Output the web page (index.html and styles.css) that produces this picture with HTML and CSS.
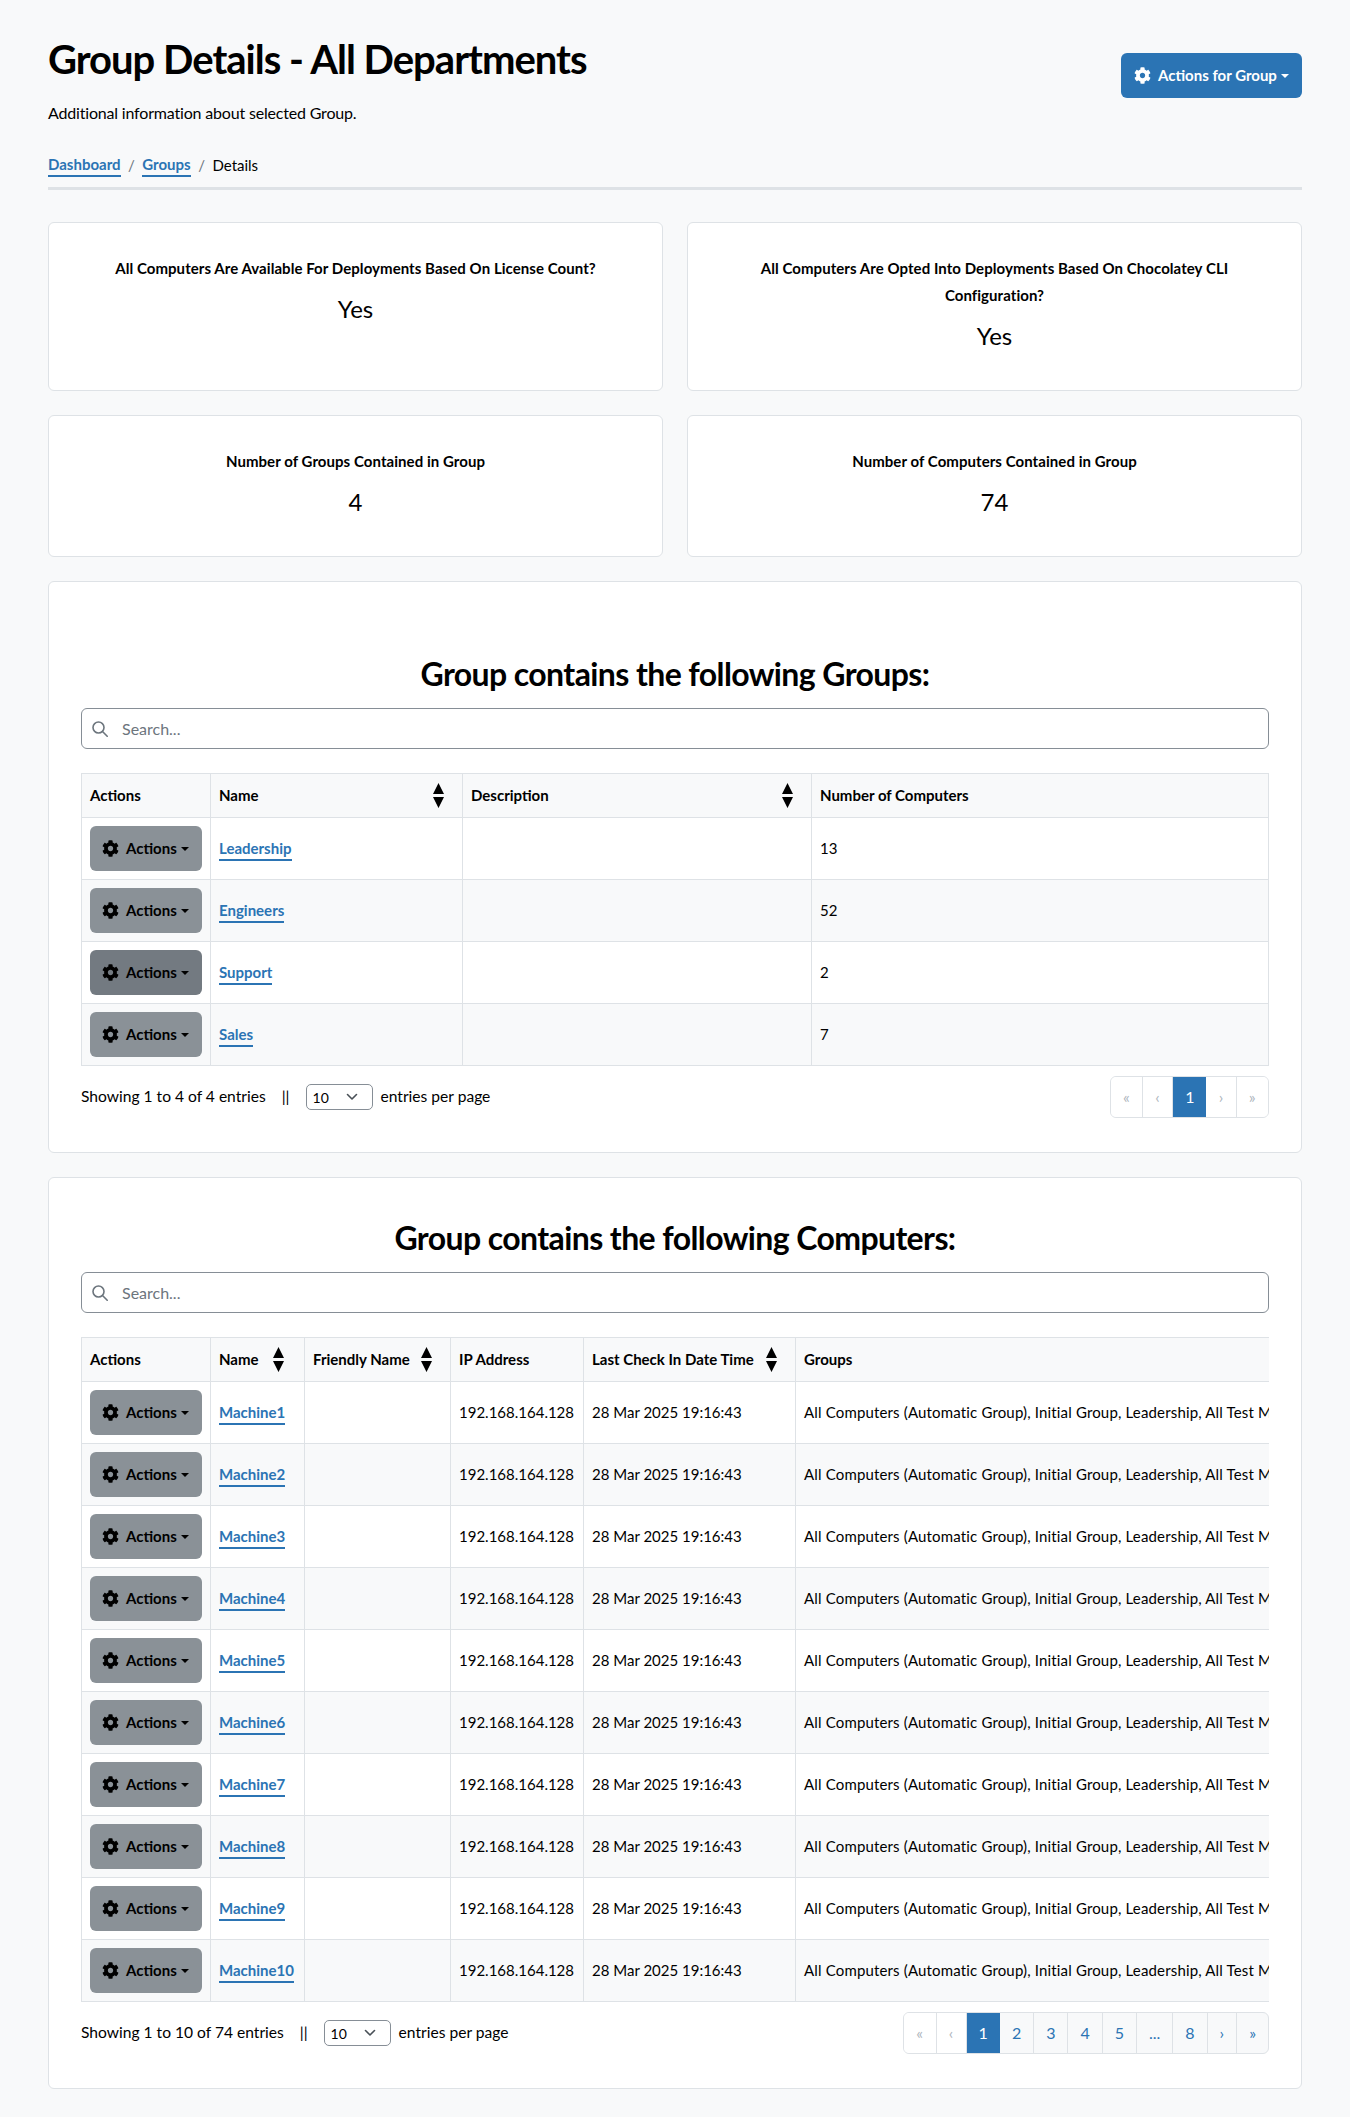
FILE: index.html
```html
<!DOCTYPE html>
<html>
<head>
<meta charset="utf-8">
<title>Group Details</title>
<link rel="stylesheet" href="styles.css">
</head>
<body>
<svg class="sprite">
<symbol id="gear" viewBox="0 0 512 512"><path d="M487.4 315.7l-42.6-24.6c4.3-23.2 4.3-47 0-70.2l42.6-24.6c4.9-2.8 7.1-8.6 5.5-14-11.1-35.6-30-67.8-54.7-94.6-3.8-4.1-10-5.1-14.8-2.3L380.8 110c-17.9-15.4-38.5-27.3-60.8-35.1V25.8c0-5.6-3.9-10.5-9.4-11.7-36.7-8.2-74.3-7.8-109.2 0-5.5 1.2-9.4 6.1-9.4 11.7V75c-22.2 7.9-42.8 19.8-60.8 35.1L88.7 85.5c-4.9-2.8-11-1.9-14.8 2.3-24.7 26.7-43.6 58.9-54.7 94.6-1.7 5.4.6 11.2 5.5 14L67.3 221c-4.3 23.2-4.3 47 0 70.2l-42.6 24.6c-4.9 2.8-7.1 8.6-5.5 14 11.1 35.6 30 67.8 54.7 94.6 3.8 4.1 10 5.1 14.8 2.3l42.6-24.6c17.9 15.4 38.5 27.3 60.8 35.1v49.2c0 5.6 3.9 10.5 9.4 11.7 36.7 8.2 74.3 7.8 109.2 0 5.5-1.2 9.4-6.1 9.4-11.7v-49.2c22.2-7.9 42.8-19.8 60.8-35.1l42.6 24.6c4.9 2.8 11 1.9 14.8-2.3 24.7-26.7 43.6-58.9 54.7-94.6 1.5-5.5-.7-11.3-5.6-14.1zM256 336c-44.1 0-80-35.9-80-80s35.9-80 80-80 80 35.9 80 80-35.9 80-80 80z"/></symbol>
<symbol id="sort" viewBox="0 0 11 25"><path d="M5.5 0L11 11H0zM0 14h11L5.5 25z"/></symbol>
<symbol id="search" viewBox="0 0 16 16"><circle cx="6.5" cy="6.5" r="5.5" fill="none" stroke="currentColor" stroke-width="1.6"/><path d="M10.5 10.5L15.2 15.2" stroke="currentColor" stroke-width="1.6" stroke-linecap="round"/></symbol>
<symbol id="chevron" viewBox="0 0 12 8"><path d="M1.5 1.5L6 6l4.5-4.5" fill="none" stroke="currentColor" stroke-width="1.6" stroke-linecap="round" stroke-linejoin="round"/></symbol>
</svg>

<div class="page">

<div class="page-head">
<div>
<h1>Group Details - All Departments</h1>
<p class="lead">Additional information about selected Group.</p>
<div class="crumbs">
<a href="#">Dashboard</a><span class="sep">/</span><a href="#">Groups</a><span class="sep">/</span><span>Details</span>
</div>
</div>
<a href="#" class="btn btn-primary"><svg class="gear"><use href="#gear"/></svg>Actions for Group<span class="caret"></span></a>
</div>
<hr class="rule">

<div class="stats">
<div class="card stat">
<div class="stat-title">All Computers Are Available For Deployments Based On License Count?</div>
<div class="stat-value">Yes</div>
</div>
<div class="card stat">
<div class="stat-title">All Computers Are Opted Into Deployments Based On Chocolatey CLI Configuration?</div>
<div class="stat-value">Yes</div>
</div>
<div class="card stat">
<div class="stat-title">Number of Groups Contained in Group</div>
<div class="stat-value">4</div>
</div>
<div class="card stat">
<div class="stat-title">Number of Computers Contained in Group</div>
<div class="stat-value">74</div>
</div>
</div>

<div class="card panel panel-first">
<h2>Group contains the following Groups:</h2>
<div class="search"><svg class="search-icon"><use href="#search"/></svg><span>Search...</span></div>
<div class="table-wrap">
<table class="grid groups-grid">
<colgroup><col class="g1"><col class="g2"><col class="g3"><col class="g4"></colgroup>
<thead>
<tr><th>Actions</th><th><div class="th-sort">Name<svg class="sort"><use href="#sort"/></svg></div></th><th><div class="th-sort">Description<svg class="sort"><use href="#sort"/></svg></div></th><th>Number of Computers</th></tr>
</thead>
<tbody>
<tr><td><a href="#" class="btn btn-row"><svg class="gear"><use href="#gear"/></svg>Actions<span class="caret"></span></a></td><td><a href="#" class="link">Leadership</a></td><td></td><td>13</td></tr>
<tr><td><a href="#" class="btn btn-row"><svg class="gear"><use href="#gear"/></svg>Actions<span class="caret"></span></a></td><td><a href="#" class="link">Engineers</a></td><td></td><td>52</td></tr>
<tr><td><a href="#" class="btn btn-row btn-hover"><svg class="gear"><use href="#gear"/></svg>Actions<span class="caret"></span></a></td><td><a href="#" class="link">Support</a></td><td></td><td>2</td></tr>
<tr><td><a href="#" class="btn btn-row"><svg class="gear"><use href="#gear"/></svg>Actions<span class="caret"></span></a></td><td><a href="#" class="link">Sales</a></td><td></td><td>7</td></tr>
</tbody>
</table>
</div>
<div class="table-foot">
<div class="showing">Showing 1 to 4 of 4 entries<span class="bars">||</span><span class="per-page">10<svg class="chevron"><use href="#chevron"/></svg></span>entries per page</div>
<ul class="pager">
<li class="off">«</li><li class="off">‹</li><li class="on">1</li><li class="off">›</li><li class="off">»</li>
</ul>
</div>
</div>

<div class="card panel">
<h2>Group contains the following Computers:</h2>
<div class="search"><svg class="search-icon"><use href="#search"/></svg><span>Search...</span></div>
<div class="table-wrap">
<table class="grid computers-grid">
<colgroup><col class="c1"><col class="c2"><col class="c3"><col class="c4"><col class="c5"><col class="c6"></colgroup>
<thead>
<tr><th>Actions</th><th><div class="th-sort">Name<svg class="sort sort-name"><use href="#sort"/></svg></div></th><th><div class="th-sort">Friendly Name<svg class="sort"><use href="#sort"/></svg></div></th><th>IP Address</th><th><div class="th-sort">Last Check In Date Time<svg class="sort"><use href="#sort"/></svg></div></th><th>Groups</th></tr>
</thead>
<tbody>
<tr><td><a href="#" class="btn btn-row"><svg class="gear"><use href="#gear"/></svg>Actions<span class="caret"></span></a></td><td><a href="#" class="link">Machine1</a></td><td></td><td>192.168.164.128</td><td>28 Mar 2025 19:16:43</td><td class="groups-cell">All Computers (Automatic Group), Initial Group, Leadership, All Test Machines</td></tr>
<tr><td><a href="#" class="btn btn-row"><svg class="gear"><use href="#gear"/></svg>Actions<span class="caret"></span></a></td><td><a href="#" class="link">Machine2</a></td><td></td><td>192.168.164.128</td><td>28 Mar 2025 19:16:43</td><td class="groups-cell">All Computers (Automatic Group), Initial Group, Leadership, All Test Machines</td></tr>
<tr><td><a href="#" class="btn btn-row"><svg class="gear"><use href="#gear"/></svg>Actions<span class="caret"></span></a></td><td><a href="#" class="link">Machine3</a></td><td></td><td>192.168.164.128</td><td>28 Mar 2025 19:16:43</td><td class="groups-cell">All Computers (Automatic Group), Initial Group, Leadership, All Test Machines</td></tr>
<tr><td><a href="#" class="btn btn-row"><svg class="gear"><use href="#gear"/></svg>Actions<span class="caret"></span></a></td><td><a href="#" class="link">Machine4</a></td><td></td><td>192.168.164.128</td><td>28 Mar 2025 19:16:43</td><td class="groups-cell">All Computers (Automatic Group), Initial Group, Leadership, All Test Machines</td></tr>
<tr><td><a href="#" class="btn btn-row"><svg class="gear"><use href="#gear"/></svg>Actions<span class="caret"></span></a></td><td><a href="#" class="link">Machine5</a></td><td></td><td>192.168.164.128</td><td>28 Mar 2025 19:16:43</td><td class="groups-cell">All Computers (Automatic Group), Initial Group, Leadership, All Test Machines</td></tr>
<tr><td><a href="#" class="btn btn-row"><svg class="gear"><use href="#gear"/></svg>Actions<span class="caret"></span></a></td><td><a href="#" class="link">Machine6</a></td><td></td><td>192.168.164.128</td><td>28 Mar 2025 19:16:43</td><td class="groups-cell">All Computers (Automatic Group), Initial Group, Leadership, All Test Machines</td></tr>
<tr><td><a href="#" class="btn btn-row"><svg class="gear"><use href="#gear"/></svg>Actions<span class="caret"></span></a></td><td><a href="#" class="link">Machine7</a></td><td></td><td>192.168.164.128</td><td>28 Mar 2025 19:16:43</td><td class="groups-cell">All Computers (Automatic Group), Initial Group, Leadership, All Test Machines</td></tr>
<tr><td><a href="#" class="btn btn-row"><svg class="gear"><use href="#gear"/></svg>Actions<span class="caret"></span></a></td><td><a href="#" class="link">Machine8</a></td><td></td><td>192.168.164.128</td><td>28 Mar 2025 19:16:43</td><td class="groups-cell">All Computers (Automatic Group), Initial Group, Leadership, All Test Machines</td></tr>
<tr><td><a href="#" class="btn btn-row"><svg class="gear"><use href="#gear"/></svg>Actions<span class="caret"></span></a></td><td><a href="#" class="link">Machine9</a></td><td></td><td>192.168.164.128</td><td>28 Mar 2025 19:16:43</td><td class="groups-cell">All Computers (Automatic Group), Initial Group, Leadership, All Test Machines</td></tr>
<tr><td><a href="#" class="btn btn-row"><svg class="gear"><use href="#gear"/></svg>Actions<span class="caret"></span></a></td><td><a href="#" class="link">Machine10</a></td><td></td><td>192.168.164.128</td><td>28 Mar 2025 19:16:43</td><td class="groups-cell">All Computers (Automatic Group), Initial Group, Leadership, All Test Machines</td></tr>
</tbody>
</table>
</div>
<div class="table-foot">
<div class="showing">Showing 1 to 10 of 74 entries<span class="bars">||</span><span class="per-page">10<svg class="chevron"><use href="#chevron"/></svg></span>entries per page</div>
<ul class="pager">
<li class="off">«</li><li class="off">‹</li><li class="on">1</li><li>2</li><li>3</li><li>4</li><li>5</li><li>...</li><li>8</li><li>›</li><li>»</li>
</ul>
</div>
</div>

</div> <!-- page -->
</body>
</html>
```

FILE: styles.css
```css
body {
	margin: 0;
	background: #f8f9fa;
	color: #000;
	font-family: "Lato", "Liberation Sans", sans-serif;
	font-size: 16px;
	line-height: 1.5;
}

a {
	text-decoration: none;
}

.sprite {
	display: none;
}

.page {
	padding: 36px 48px 28px;
}

.page-head {
	display: flex;
	justify-content: space-between;
	align-items: flex-start;
}

h1 {
	margin: -1px 0 18px;
	font-size: 40px;
	line-height: 48px;
	font-weight: 700;
	letter-spacing: -1px;
}

.lead {
	margin: 0 0 28px;
	letter-spacing: -.18px;
}

.crumbs {
	display: flex;
	height: 24px;
	font-size: 15px;
	line-height: 24px;
}

.crumbs a {
	color: #2b74b4;
	font-weight: 700;
	border-bottom: 2px solid #2b74b4;
	padding-top: 1px;
	line-height: 21px;
	height: 21px;
}

.sep {
	color: #6c757d;
	margin: 0 7.5px;
}

.rule {
	height: 3px;
	margin: 10px 0 32px;
	border: 0;
	background: #dee2e6;
}

.btn {
	display: inline-flex;
	align-items: center;
	height: 45px;
	box-sizing: border-box;
	border-radius: 6px;
	font-weight: 700;
	font-size: 15px;
}

.btn-primary {
	margin-top: 17px;
	width: 181px;
	padding-left: 13px;
	background: #2b74b4;
	color: #fff;
}

.btn-row {
	width: 112px;
	padding-left: 12px;
	background: #8a9197;
	color: #000;
	vertical-align: top;
}

.btn-hover {
	background: #737a81;
}

.gear {
	width: 17px;
	height: 17px;
	margin-right: 7px;
	fill: currentColor;
}

.caret {
	margin-left: 4px;
	border-top: 4px solid currentColor;
	border-left: 4px solid transparent;
	border-right: 4px solid transparent;
}

.stats {
	display: grid;
	grid-template-columns: 1fr 1fr;
	gap: 24px;
	margin-bottom: 24px;
}

.card {
	background: #fff;
	border: 1px solid #dee2e6;
	border-radius: 6px;
}

.stat {
	padding: 32px 64px 37px;
	text-align: center;
}

.stat-title {
	font-size: 15px;
	line-height: 27px;
	font-weight: 700;
	letter-spacing: .06px;
}

.stat-value {
	margin-top: 10px;
	font-size: 24px;
	line-height: 34px;
}

.panel {
	padding: 41px 32px 34px;
	margin-bottom: 24px;
}

.panel:last-child {
	margin-bottom: 0;
}

.panel-first {
	padding-top: 73px;
}

h2 {
	margin: 0 0 15px;
	font-size: 32px;
	line-height: 38px;
	font-weight: 700;
	text-align: center;
	letter-spacing: -.6px;
}

.search {
	display: flex;
	align-items: center;
	height: 41px;
	box-sizing: border-box;
	border: 1px solid #868e96;
	border-radius: 6px;
	color: #6c757d;
	font-size: 16px;
}

.search-icon {
	width: 16px;
	height: 16px;
	margin: 0 14px 0 10px;
}

.table-wrap {
	margin-top: 24px;
	overflow: hidden;
}

.grid {
	border-collapse: collapse;
	table-layout: fixed;
	font-size: 15px;
}

.grid th,
.grid td {
	border: 1px solid #dee2e6;
	padding: 8px;
	text-align: left;
	white-space: nowrap;
}

.grid th {
	height: 27px;
	background: #f8f9fa;
	font-weight: 700;
	font-size: 15px;
	line-height: 27px;
}

.grid td {
	line-height: 45px;
}

.grid .groups-cell {
	letter-spacing: .16px;
}

.grid tbody tr:nth-child(even) td {
	background: #f8f9fa;
}

.groups-grid {
	width: 1187px;
}

.g1 { width: 129px; }
.g2 { width: 252px; }
.g3 { width: 349px; }
.g4 { width: 457px; }

.computers-grid {
	width: 1400px;
}

.c1 { width: 129px; }
.c2 { width: 94px; }
.c3 { width: 146px; }
.c4 { width: 133px; }
.c5 { width: 212px; }
.c6 { width: 686px; }

.th-sort {
	display: flex;
	justify-content: space-between;
	align-items: center;
}

.sort {
	flex: none;
	width: 11px;
	height: 25px;
	margin-right: 10px;
}

.sort-name {
	margin-right: 12px;
}

.link {
	color: #2b74b4;
	font-weight: 700;
	border-bottom: 2px solid #2b74b4;
	padding-bottom: 2px;
}

.table-foot {
	display: flex;
	justify-content: space-between;
	align-items: flex-start;
	margin-top: 10px;
}

.showing {
	display: flex;
	align-items: center;
	height: 42px;
	font-size: 15.6px;
}

.bars {
	margin: 0 16px;
}

.per-page {
	display: flex;
	align-items: center;
	justify-content: space-between;
	width: 67px;
	height: 26px;
	box-sizing: border-box;
	padding: 0 14px 0 6px;
	margin-right: 8px;
	border: 1px solid #868e96;
	border-radius: 5px;
	font-size: 14px;
}

.chevron {
	width: 12px;
	height: 8px;
	color: #495057;
}

.pager {
	display: flex;
	height: 42px;
	box-sizing: border-box;
	margin: 0;
	padding: 0;
	list-style: none;
	font-size: 16px;
	line-height: 40px;
	color: #2b74b4;
	background: #f8f9fa;
	border: 1px solid #dee2e6;
	border-radius: 6px;
	overflow: hidden;
}

.pager li {
	padding: 0 12px;
	border-right: 1px solid #dee2e6;
	text-align: center;
}

.pager li:last-child {
	border-right: 0;
}

.pager .off {
	padding: 0 12.3px;
	background: #fff;
	color: #adb5bd;
}

.pager .on {
	background: #2b74b4;
	color: #fff;
	margin: -1px 0;
	line-height: 42px;
	border-right: 0;
}
```
